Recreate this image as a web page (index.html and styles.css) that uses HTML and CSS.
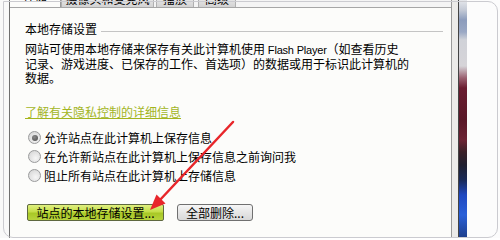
FILE: index.html
```html
<!DOCTYPE html>
<html lang="zh-CN">
<head>
<meta charset="utf-8">
<link rel="stylesheet" href="styles.css">
</head>
<body>
<div class="screen">
  <div class="gutter-left"></div>
  <div class="dialog">
    <div class="tabs">
      <div class="tab active"><span>存储</span></div>
      <div class="tab wide"><span>摄像头和麦克风</span></div>
      <div class="tab"><span>播放</span></div>
      <div class="tab"><span>高级</span></div>
    </div>
    <div class="panel">
      <div class="group-title"><span>本地存储设置</span><i class="rule"></i></div>
      <p class="desc">网站可使用本地存储来保存有关此计算机使用<span class="latin"> Flash Player</span>（如查看历史<br>记录、游戏进度、已保存的工作、首选项）的数据或用于标识此计算机的<br>数据。</p>
      <a class="link">了解有关隐私控制的详细信息</a>
      <div class="radios">
        <div class="radio checked"><span class="circle"></span><span>允许站点在此计算机上保存信息</span></div>
        <div class="radio"><span class="circle"></span><span>在允许新站点在此计算机上保存信息之前询问我</span></div>
        <div class="radio"><span class="circle"></span><span>阻止所有站点在此计算机上存储信息</span></div>
      </div>
      <div class="buttons">
        <button class="btn btn-hl">站点的本地存储设置...</button>
        <button class="btn">全部删除...</button>
      </div>
    </div>
  </div>
  <div class="frame-gap"></div>
  <div class="desktop"></div>
  <div class="gutter-right"></div>
  <div class="frame"></div>
  <svg class="arrow" width="500" height="240" viewBox="0 0 500 240">
    <line x1="233" y1="122" x2="159" y2="201" stroke="#e8262a" stroke-width="2.5" stroke-linecap="round"/>
    <polygon points="150,210 165.5,203.5 156.5,194.5" fill="#e8262a"/>
  </svg>
</div>
</body>
</html>
```
FILE: styles.css
```css
* { box-sizing: border-box; }
html, body { margin: 0; padding: 0; background: #ffffff; }
body {
  width: 500px;
  height: 240px;
  overflow: hidden;
  font-family: "Noto Sans CJK SC", sans-serif;
  font-size: 12px;
  color: #000;
}
.screen {
  position: relative;
  width: 500px;
  height: 238px;
  display: flex;
  overflow: hidden;
  background: #fff;
}
.gutter-left {
  width: 9px;
  background: #f9f9f9;
}
.dialog {
  width: 443px;
  display: flex;
  flex-direction: column;
  border-left: 1px solid #6f6f6f;
  border-right: 1px solid #9a9a9a;
  background: #fcfcfa;
}
.tabs {
  height: 7px;
  display: flex;
  overflow: hidden;
  background: #f4f4f4;
}
.tab {
  width: 38px;
  margin-right: 4px;
  background: linear-gradient(#e4e4e4, #d2d2d2);
  border-left: 1px solid #b0b0b0;
  border-right: 1px solid #b0b0b0;
  text-align: center;
  line-height: 14px;
  white-space: nowrap;
}
.tab span { display: block; margin-top: -8px; }
.tab.wide { width: 93px; margin-right: 2px; }
.tab.active {
  width: 51px;
  margin-right: 0;
  background: #fcfcfa;
  border-left: none;
  border-right: 1px solid #9a9a9a;
}
.tab.active span { margin-top: -11px; }
.panel {
  flex: 1;
  border-top: 1px solid #a6a6a6;
  padding: 14px 8px 0 15px;
  line-height: 14px;
}
.group-title {
  display: flex;
  align-items: center;
  gap: 4px;
}
.rule {
  flex: 1;
  height: 1px;
  margin-top: 4px;
  background: #c4c4c4;
}
.desc {
  margin: 6px 0 0;
  white-space: nowrap;
}
.latin {
  font-family: "Liberation Sans", sans-serif;
  font-size: 11px;
  letter-spacing: -0.2px;
}
.link {
  display: block;
  width: fit-content;
  margin-top: 20px;
  color: #a3b51e;
  text-decoration: underline;
  cursor: pointer;
}
.radios {
  margin-top: 9px;
  display: flex;
  flex-direction: column;
}
.radio {
  height: 19px;
  display: flex;
  align-items: center;
  gap: 3px;
  padding-left: 3px;
}
.circle {
  width: 13px;
  height: 13px;
  border-radius: 50%;
  border: 1px solid #9a9b9c;
  background: radial-gradient(circle at 60% 65%, #f6f6f6 0, #e2e2e2 55%, #cfcfcf 100%);
  display: flex;
  align-items: center;
  justify-content: center;
  flex: none;
}
.radio.checked .circle::after {
  content: "";
  width: 6px;
  height: 6px;
  border-radius: 50%;
  background: radial-gradient(circle at 40% 35%, #8a8a8a, #4a4a4a);
}
.buttons {
  margin-top: 19px;
  padding-left: 2px;
  display: flex;
  gap: 13px;
}
.btn {
  height: 17px;
  padding: 0 8px;
  font: inherit;
  line-height: 15px;
  color: #000;
  border: 1px solid #707070;
  border-radius: 3px;
  background: linear-gradient(#f6f6f6, #e6e6e6 50%, #d8d8d8);
  white-space: nowrap;
}
.btn-hl {
  width: 137px;
  border-color: #5e6840;
  border-radius: 2px;
  background: linear-gradient(#e0f080, #c4de48 45%, #a8c826 55%, #b8d43c);
}
.frame-gap {
  width: 6px;
  background: #ecebe9;
}
.desktop {
  width: 9px;
  border-left: 1px solid #444;
  background: linear-gradient(to bottom,
    #e6e8ec 0, #c4cad6 10px, #8c9cbc 20px, #9aa8c4 32px, #d0d2d8 40px,
    #d6d4d8 66px, #9a6070 78px, #6a1c30 88px, #5a1828 120px, #6c2434 140px,
    #3a2028 152px, #202030 165px, #1a2a58 180px, #2048c0 195px, #2a60d8 215px, #1f3f8a 238px);
}
.gutter-right {
  flex: 1;
  background: #fcfcfc;
}
.frame {
  position: absolute;
  left: 3px;
  top: 1px;
  width: 495px;
  height: 237px;
  border: 1px solid #cbcbd0;
  border-radius: 0 10px 10px 10px;
  pointer-events: none;
}
.arrow {
  position: absolute;
  left: 0;
  top: 0;
  pointer-events: none;
}
```
